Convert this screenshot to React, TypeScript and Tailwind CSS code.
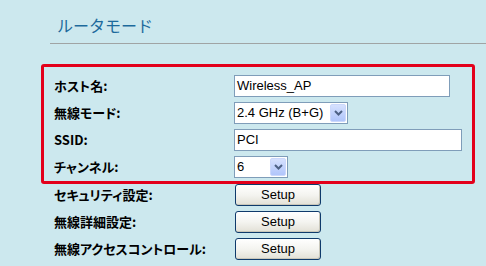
import React from "react";

const jp = { fontFamily: '"Noto Sans CJK JP", "Liberation Sans", sans-serif' };
const jpLabel = { fontFamily: '"Noto Sans CJK JP", "Liberation Sans", sans-serif', fontFeatureSettings: '"palt"' };
const latin = { fontFamily: '"Liberation Sans", Arial, sans-serif' };

function Label({ children }: { children: React.ReactNode }) {
  return (
    <div className="w-[180px] shrink-0 text-[13px] font-bold leading-[14px] text-black" style={jpLabel}>
      {children}
    </div>
  );
}

function TextBox({ value, width }: { value: string; width: number }) {
  return (
    <div
      className="h-[22px] border border-[#7f9db9] bg-white pl-[2px] flex items-center text-[13px] text-black"
      style={{ ...latin, width }}
    >
      {value}
    </div>
  );
}

function Chevron() {
  return (
    <svg width="9" height="6" viewBox="0 0 9 6">
      <polyline points="1,1 4.5,4.5 8,1" fill="none" stroke="#4d6185" strokeWidth="2" />
    </svg>
  );
}

function Select({ value, width }: { value: string; width: number }) {
  return (
    <div
      className="h-[22px] border border-[#7f9db9] bg-white flex items-center text-[13px] text-black"
      style={{ ...latin, width }}
    >
      <div className="flex-1 pl-[2px]">{value}</div>
      <div className="w-[16px] h-[18px] mr-[1px] rounded-[2px] border border-[#cbd8fc] bg-gradient-to-b from-[#d6e1fe] to-[#b0c5fb] flex items-center justify-center">
        <Chevron />
      </div>
    </div>
  );
}

function Button() {
  return (
    <div
      className="ml-[1px] w-[86px] h-[22px] rounded-[3px] border border-[#0f3a6b] bg-gradient-to-b from-[#ffffff] via-[#f4f4f0] to-[#e2e0d6] flex items-center justify-center text-[13px] text-black shadow-[inset_-1px_-1px_0_#c9c7ba]"
      style={latin}
    >
      Setup
    </div>
  );
}

export default function App() {
  return (
    <div className="w-[486px] h-[266px] bg-[#cce8ee] overflow-hidden">
      <div className="h-[43px] pl-[57px] pt-[15px] text-[16px] leading-[20px] text-[#1d6a9c]" style={jp}>
        ルータモード
      </div>
      <div className="ml-[50px] h-[1px] bg-[#a0a4a4]" />
      <div className="mt-[20px] ml-[41px] w-[434px] h-[120px] border-[3px] border-[#e3001b] rounded-[3px] pl-[10px] pt-[8px] flex flex-col gap-[5px]">
        <div className="flex items-center h-[22px]">
          <Label>ホスト名:</Label>
          <TextBox value="Wireless_AP" width={216} />
        </div>
        <div className="flex items-center h-[22px]">
          <Label>無線モード:</Label>
          <Select value="2.4 GHz (B+G)" width={114} />
        </div>
        <div className="flex items-center h-[22px]">
          <Label>SSID:</Label>
          <TextBox value="PCI" width={228} />
        </div>
        <div className="flex items-center h-[22px]">
          <Label>チャンネル:</Label>
          <Select value="6" width={54} />
        </div>
      </div>
      <div className="pl-[54px] flex flex-col gap-[5px]">
        <div className="flex items-center h-[22px]">
          <Label>セキュリティ設定:</Label>
          <Button />
        </div>
        <div className="flex items-center h-[22px]">
          <Label>無線詳細設定:</Label>
          <Button />
        </div>
        <div className="flex items-center h-[22px]">
          <Label>無線アクセスコントロール:</Label>
          <Button />
        </div>
      </div>
    </div>
  );
}
